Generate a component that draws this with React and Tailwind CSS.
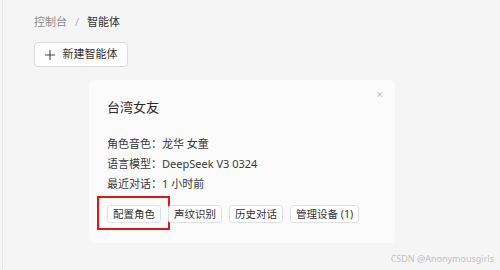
import React from "react";

const font = { fontFamily: '"Noto Sans", "Noto Sans CJK SC", sans-serif' };

const actions = ["配置角色", "声纹识别", "历史对话", "管理设备 (1)"];

const App = () => {
  return (
    <div className="relative w-[500px] h-[270px] overflow-hidden bg-[#f5f5f5] text-[#3a3a3a]" style={font}>
      {/* left edge line */}
      <div className="absolute left-[2px] top-0 h-full w-px bg-[#e6e6e6]" />

      <div className="pl-[34px] pt-[13px]">
        {/* Breadcrumb */}
        <div className="flex items-center text-[11px] leading-[18px]">
          <span className="text-[#8c8c8c]">控制台</span>
          <span className="mx-[8px] text-[#b0b0b0]">/</span>
          <span className="text-[#333]">智能体</span>
        </div>

        {/* New agent button */}
        <button className="mt-[11px] flex h-[25px] w-[94px] items-center justify-center gap-[8px] rounded-[4px] border border-[#dcdcdc] bg-white text-[11px] text-[#333]">
          <svg width="10" height="10" viewBox="0 0 10 10" className="text-[#444]">
            <path d="M5 0v10M0 5h10" stroke="currentColor" strokeWidth="1.1" />
          </svg>
          新建智能体
        </button>

        {/* Card */}
        <div className="relative ml-[55px] mt-[13px] w-[306px] rounded-[6px] bg-[#fbfbfb] px-[18px] pb-[19px] pt-[17px]">
          <span className="absolute right-[12px] top-[8px] text-[12px] leading-[14px] text-[#c4c4c4]">×</span>
          <div className="text-[13px] leading-[20px] text-[#2b2b2b]">台湾女友</div>

          <div className="mt-[18px] flex flex-col gap-[2px] text-[11px] leading-[18px]">
            <div>角色音色：龙华 女童</div>
            <div>语言模型：DeepSeek V3 0324</div>
            <div>最近对话：1 小时前</div>
          </div>

          <div className="mt-[7px] flex gap-[7px]">
            {actions.map((a, i) => (
              <div key={a} className="relative">
                <button className="h-[18px] whitespace-nowrap rounded-[3px] border border-[#e0e0e0] bg-white px-[5px] text-[10.5px] leading-[16px] text-[#333]">
                  {a}
                </button>
                {i === 0 && (
                  <div className="pointer-events-none absolute -left-[10px] -right-[9px] -top-[4px] -bottom-[6px] border-2 border-[#e3141c]" />
                )}
              </div>
            ))}
          </div>
        </div>
      </div>

      {/* watermark */}
      <div className="absolute bottom-[6px] right-[6px] text-[9px] leading-[11px] text-[#c2c2c2]">CSDN @Anonymousgirls</div>
    </div>
  );
};

export default App;
